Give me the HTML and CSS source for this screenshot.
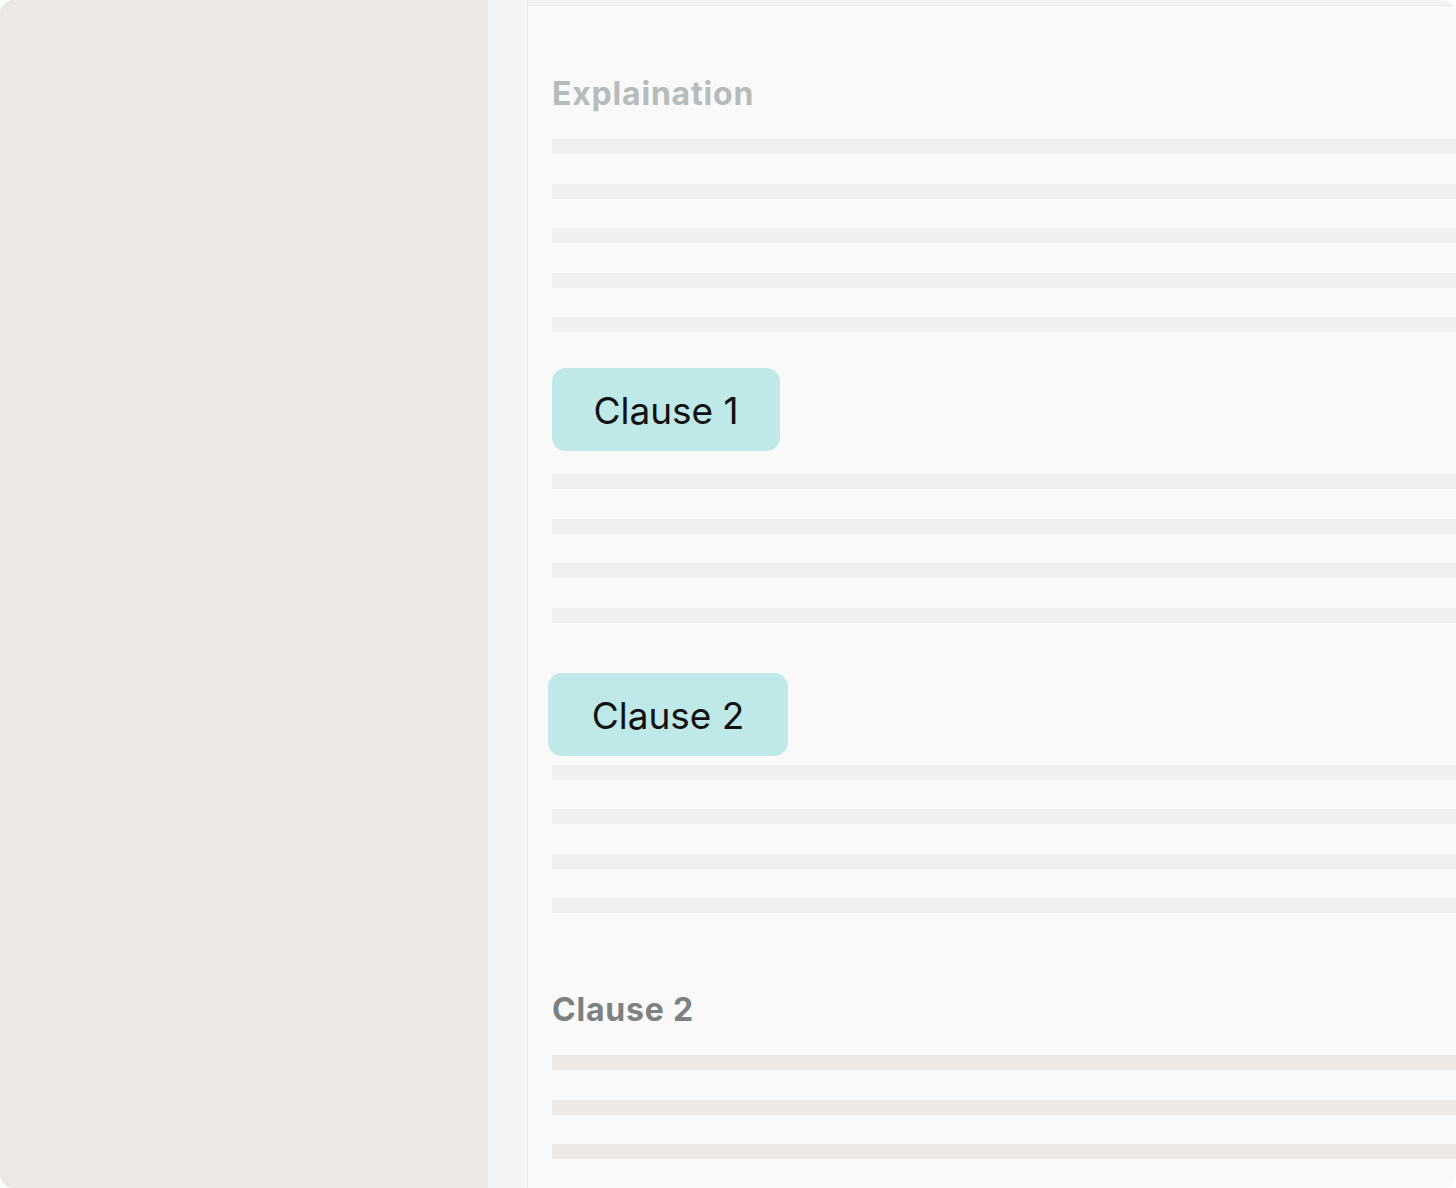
FILE: index.html
```html
<!DOCTYPE html>
<html>
<head>
<meta charset="utf-8">
<link rel="stylesheet" href="styles.css">
</head>
<body>
<div class="frame">
  <aside class="side"></aside>
  <div class="rail"></div>
  <main class="doc">
    <h2 class="title light">Explaination</h2>
    <div class="bars first">
      <div class="bar"></div><div class="bar"></div><div class="bar"></div><div class="bar"></div><div class="bar"></div>
    </div>
    <div class="chip chip1">Clause 1</div>
    <div class="bars after1">
      <div class="bar"></div><div class="bar"></div><div class="bar"></div><div class="bar"></div>
    </div>
    <div class="chip chip2">Clause 2</div>
    <div class="bars after2">
      <div class="bar"></div><div class="bar"></div><div class="bar"></div><div class="bar"></div>
    </div>
    <h2 class="title dark">Clause 2</h2>
    <div class="bars last">
      <div class="bar warm"></div><div class="bar warm"></div><div class="bar warm"></div>
    </div>
  </main>
</div>
</body>
</html>
```
FILE: styles.css
```css
html, body {
  margin: 0;
  padding: 0;
  background: #ffffff;
}
.frame {
  width: 1456px;
  height: 1188px;
  display: flex;
  border-radius: 14px;
  overflow: hidden;
  font-family: Inter, "Liberation Sans", sans-serif;
  background: #f3f4f4;
}
.side {
  width: 488px;
  flex: none;
  background: #ece8e5;
}
.rail {
  width: 39px;
  flex: none;
  background: #f3f4f4;
  border-right: 1px solid #e8e9e9;
}
.doc {
  flex: 1;
  margin-top: 5px;
  border-top: 1px solid #e9e9e9;
  background: #f9f9f9;
  padding-left: 24px;
  display: flex;
  flex-direction: column;
  align-items: flex-start;
}
.title {
  margin: 0;
  font-size: 32px;
  line-height: 40px;
  font-weight: 700;
  letter-spacing: 0.8px;
}
.title.light {
  color: #b6bbbb;
  margin-top: 68px;
}
.title.dark {
  color: #7c8181;
  margin-top: 77px;
}
.bars {
  align-self: stretch;
  display: flex;
  flex-direction: column;
  gap: 29.5px;
}
.bar {
  height: 15px;
  background: #f0f0f0;
}
.bar.warm {
  background: #ece9e7;
}
.bars.first { margin-top: 25px; }
.bars.after1 { margin-top: 23px; }
.bars.after2 { margin-top: 9px; }
.bars.last { margin-top: 25px; }
.chip {
  height: 83px;
  box-sizing: border-box;
  display: flex;
  align-items: center;
  justify-content: center;
  padding-top: 2px;
  background: #bee9e8;
  border-radius: 14px;
  font-size: 37px;
  color: #111111;
  font-weight: 400;
}
.chip1 {
  width: 228px;
  margin-top: 36px;
}
.chip2 {
  width: 240px;
  margin-left: -4px;
  margin-top: 50px;
}
```
